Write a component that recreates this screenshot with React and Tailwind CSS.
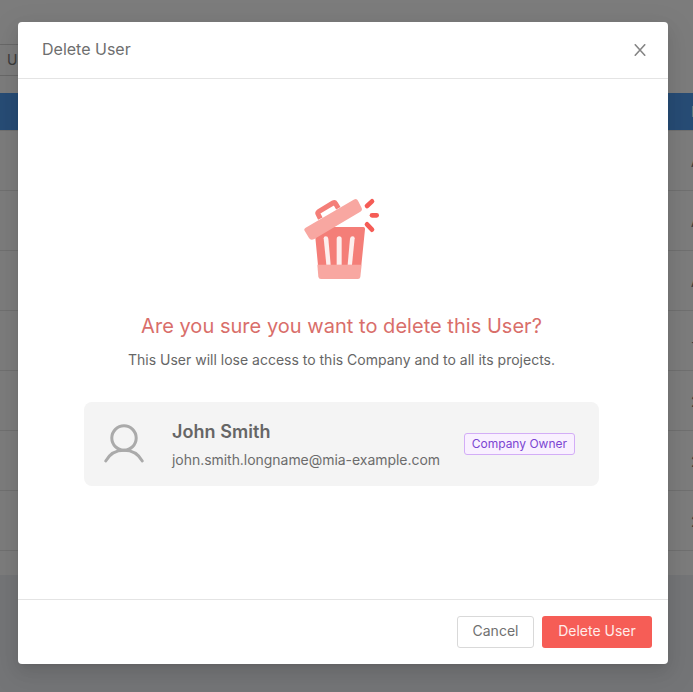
const rows = [
  { mark: 'A' },
  { mark: 'A' },
  { mark: 'A' },
  { mark: '-' },
  { mark: '2' },
  { mark: '2' },
  { mark: '2' },
];

function TrashIllustration() {
  return (
    <svg width="100" height="100" viewBox="0 0 300 300" fill="none" className="-ml-[3px]">
      <path d="M91 86 L84 72 Q82 68 86 65 L129 39 Q134 36 137 41 L145 55" stroke="#f47e78" strokeWidth="15" strokeLinejoin="round" />
      <path d="M73 111 H220 Q226 111 225 118 L214 226 H84 Z" fill="#f47e78" />
      <path d="M82 224 H215 L211 261 Q210 267 204 267 H93 Q86 267 85 260 Z" fill="#f8a7a1" />
      <path d="M101 145 Q101 139 107 139 Q114 139 115 146 L122 224 H109 Z" fill="#fdeeed" />
      <path d="M140 147 Q140 139 147.500 139 Q155 139 155 147 V224 H140 Z" fill="#fdeeed" />
      <path d="M194 145 Q194 139 188 139 Q181 139 180 146 L173 224 H186 Z" fill="#fdeeed" />
      <path d="M47 113 L191 29 Q200 24 204 32 L215 54 Q218 61 211 65 L73 147 Q62 153 57 144 L43 121 Q41 116 47 113 Z" fill="#f8a7a1" />
      <g stroke="#f55c56" strokeWidth="14" strokeLinecap="round">
        <path d="M231 48 L246 34" />
        <path d="M246 76 H260" />
        <path d="M231 103 L246 119" />
      </g>
    </svg>
  );
}

function UserIcon() {
  return (
    <svg width="40" height="40" viewBox="0 0 40 40" fill="none" stroke="#aaaaaa" strokeWidth="3" strokeLinecap="round">
      <circle cx="20" cy="14" r="12.2" />
      <path d="M1.800 36.900 C9.500 22.600 30.500 22.600 38.200 36.900" />
    </svg>
  );
}

function Backdrop() {
  return (
    <div className="h-full bg-[#e8ebee]">
      <div className="h-[575px] bg-[#f8f8f8]">
        <div className="flex h-[93px] items-start pt-[44px]">
          <div className="h-8 w-40 border-y border-[#d0d0d0] pl-[7px] text-sm leading-[30px] text-[#777]">User</div>
        </div>
        <div className="flex h-[37px] justify-end bg-[#4e98ea] text-sm leading-[37px] text-white">
          <span className="w-[2px] overflow-hidden">R</span>
        </div>
        {rows.map((row, i) => (
          <div key={i} className="flex h-[60px] justify-end border-t border-[#e0e0e0] text-sm leading-[61px] text-[#777]">
            <span className="w-[2px] overflow-hidden">{row.mark}</span>
          </div>
        ))}
        <div className="border-t border-[#e0e0e0]" />
      </div>
    </div>
  );
}

export default function App() {
  return (
    <div className="relative h-[692px] w-[693px] overflow-hidden font-['Inter',sans-serif]">
      <Backdrop />
      <div className="absolute inset-0 bg-black/50 pl-[18px] pt-[22px]">
        <div className="flex h-[642px] w-[650px] flex-col rounded-[4px] bg-white text-[#666] shadow-[0_3px_6px_-4px_rgba(0,0,0,0.12),0_6px_16px_0_rgba(0,0,0,0.08),0_9px_28px_8px_rgba(0,0,0,0.05)]">
          <header className="flex h-[57px] items-center justify-between border-b border-[#e4e4e4] pl-6 pr-[22px]">
            <h1 className="pb-[2px] text-base leading-[22px] text-[#6e6e6e]">Delete User</h1>
            <svg width="12" height="12" viewBox="0 0 12 12" stroke="#858585" strokeWidth="1.6">
              <path d="M.8 .3 L11.200 11.700 M11.200 .3 L.8 11.700" />
            </svg>
          </header>
          <main className="flex flex-1 flex-col items-center pr-[3px] pt-[111px]">
            <TrashIllustration />
            <h2 className="mt-[22px] text-xl leading-[28px] tracking-[0.03px] text-[#d96e6a]">Are you sure you want to delete this User?</h2>
            <p className="mt-[9px] text-sm leading-[22px]">This User will lose access to this Company and to all its projects.</p>
            <div className="mt-[31px] flex h-[84px] w-[515px] items-center rounded-lg bg-[#f4f4f4] pl-5 pr-6">
              <UserIcon />
              <div className="ml-7">
                <div className="pt-[2px] text-lg font-semibold leading-[26px] tracking-[0.05px]">John Smith</div>
                <div className="mt-1 text-sm leading-[22px] tracking-[-0.04px] text-[#6c6c6c]">john.smith.longname@mia-example.com</div>
              </div>
              <span className="ml-auto h-[22px] rounded-[3px] border border-[#d3adf7] bg-[#f9f0ff] px-[7px] text-xs leading-5 text-[#7b45d2]">Company Owner</span>
            </div>
          </main>
          <footer className="flex h-[65px] justify-end gap-2 border-t border-[#e4e4e4] pr-4 pt-4">
            <button className="h-8 w-[77px] rounded-[3px] border border-[#d9d9d9] pb-[2px] text-sm leading-[28px] text-[#707070]">Cancel</button>
            <button className="h-8 w-[110px] rounded-[3px] bg-[#f65d56] pb-[2px] text-sm leading-[30px] text-[#ffecea]">Delete User</button>
          </footer>
        </div>
      </div>
    </div>
  );
}
